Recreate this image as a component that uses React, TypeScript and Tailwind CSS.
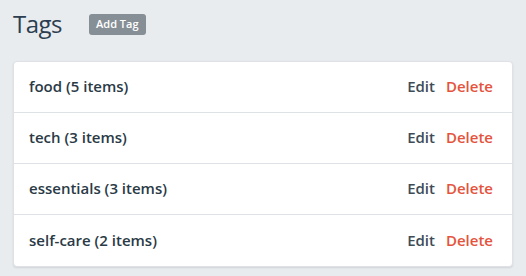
const tags = [
  { name: 'food', count: 5 },
  { name: 'tech', count: 3 },
  { name: 'essentials', count: 3 },
  { name: 'self-care', count: 2 },
];

export default function App() {
  return (
    <div className="min-h-screen w-full bg-[#e9ecef] px-[13px] pt-[9px] font-['Open_Sans',sans-serif]">
      <div className="flex items-center gap-[27px]">
        <h1 className="text-[24px] leading-[30px] tracking-[-0.5px] text-[#2c3e50]">Tags</h1>
        <button className="h-[21px] rounded-[3px] bg-[#868e96] px-[7px] text-[11px] font-semibold text-white">
          Add Tag
        </button>
      </div>

      <div className="mt-[22px] w-[500px] rounded-[4px] border border-[#dee2e6] bg-white shadow-[0_1px_2px_rgba(0,0,0,0.1)]">
        {tags.map((tag, i) => (
          <div
            key={tag.name}
            className={`flex h-[51px] items-center justify-between pl-[15px] pr-[19px] ${
              i < tags.length - 1 ? 'border-b border-[#dee2e6]' : ''
            }`}
          >
            <span className="-mt-[1px] text-[15px] font-semibold text-[#2a3a46]">
              {tag.name} ({tag.count} items)
            </span>
            <div className="-mt-[1px] flex items-center gap-[11px] text-[15px] font-semibold">
              <span className="text-[#3d4c57]">Edit</span>
              <span className="text-[#e5533d]">Delete</span>
            </div>
          </div>
        ))}
      </div>
    </div>
  );
}
